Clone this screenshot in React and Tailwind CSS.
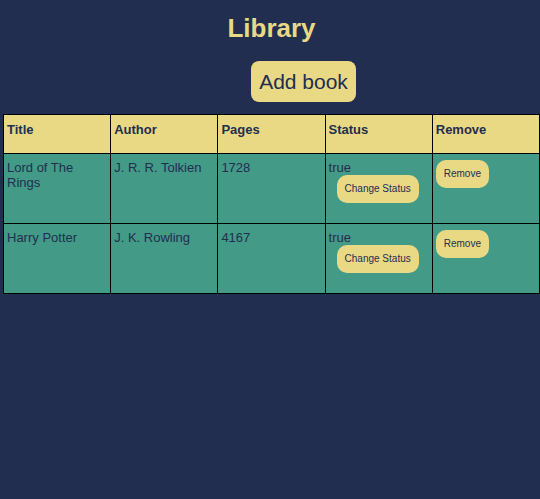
const books = [
  { title: "Lord of The Rings", author: "J. R. R. Tolkien", pages: 1728, status: "true" },
  { title: "Harry Potter", author: "J. K. Rowling", pages: 4167, status: "true" },
];

const columns = ["Title", "Author", "Pages", "Status", "Remove"];

function RowButton({ className = "", children }) {
  return (
    <button
      type="button"
      className={`block rounded-[10px] bg-[#e9d985] px-2 py-2 text-[10px] leading-3 whitespace-nowrap text-[#222e50] ${className}`}
    >
      {children}
    </button>
  );
}

export default function App() {
  return (
    <main className="min-h-screen bg-[#222e50] pt-3 font-['Liberation_Sans',Arial,sans-serif] text-[13px] leading-[15px] text-[#222e50]">
      <h1 className="pl-[3px] text-center text-[26px] leading-8 font-bold text-[#e9d985]">Library</h1>
      <div className="mt-[17px] flex justify-center pl-[67px]">
        <button type="button" className="rounded-lg bg-[#e9d985] px-2 py-2 text-[21px] leading-[25px]">
          Add book
        </button>
      </div>
      <div className="mt-3 pl-[3px]">
        <table className="w-full table-fixed border-collapse border border-black text-left">
          <thead>
            <tr className="h-[39px] bg-[#e9d985]">
              {columns.map((name) => (
                <th key={name} scope="col" className="border border-black px-[3px] pt-[7px] align-top font-bold">
                  {name}
                </th>
              ))}
            </tr>
          </thead>
          <tbody>
            {books.map((book) => (
              <tr key={book.title} className="h-[70px] bg-[#439a86]">
                <td className="border border-black px-[3px] pt-[6px] align-top">{book.title}</td>
                <td className="border border-black px-[3px] pt-[6px] align-top">{book.author}</td>
                <td className="border border-black px-[3px] pt-[6px] align-top">{book.pages}</td>
                <td className="border border-black px-[3px] pt-[6px] align-top">
                  {book.status}
                  <RowButton className="ml-2">Change Status</RowButton>
                </td>
                <td className="border border-black px-[3px] pt-[6px] align-top">
                  <RowButton>Remove</RowButton>
                </td>
              </tr>
            ))}
          </tbody>
        </table>
      </div>
    </main>
  );
}
